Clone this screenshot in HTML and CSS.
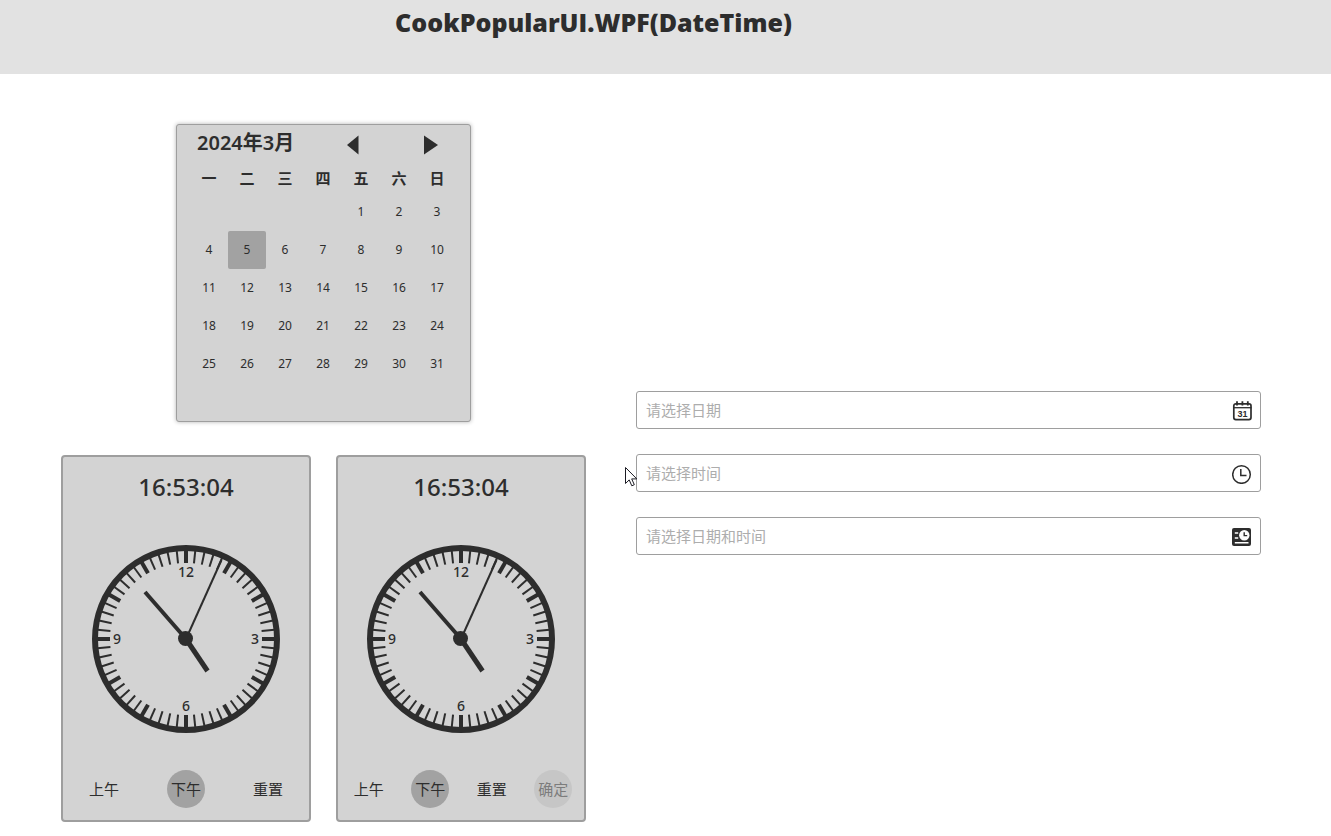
FILE: index.html
```html
<!DOCTYPE html>
<html lang="zh-CN">
<head>
  <meta charset="utf-8">
  <meta name="viewport" content="width=device-width, initial-scale=1">
  <title>CookPopularUI.WPF(DateTime)</title>
  <link rel="stylesheet" href="styles.css">
</head>
<body>
  <svg class="sprite" aria-hidden="true">
    <defs>
      <g id="hour-ticks">
        <line class="tick-major" y1="-89" y2="-76"/>
        <line class="tick-minor" y1="-89" y2="-76" transform="rotate(6)"/>
        <line class="tick-minor" y1="-89" y2="-76" transform="rotate(12)"/>
        <line class="tick-minor" y1="-89" y2="-76" transform="rotate(18)"/>
        <line class="tick-minor" y1="-89" y2="-76" transform="rotate(24)"/>
      </g>
      <g id="dial">
        <circle class="ring" r="91"/>
        <use href="#hour-ticks"/>
        <use href="#hour-ticks" transform="rotate(30)"/>
        <use href="#hour-ticks" transform="rotate(60)"/>
        <use href="#hour-ticks" transform="rotate(90)"/>
        <use href="#hour-ticks" transform="rotate(120)"/>
        <use href="#hour-ticks" transform="rotate(150)"/>
        <use href="#hour-ticks" transform="rotate(180)"/>
        <use href="#hour-ticks" transform="rotate(210)"/>
        <use href="#hour-ticks" transform="rotate(240)"/>
        <use href="#hour-ticks" transform="rotate(270)"/>
        <use href="#hour-ticks" transform="rotate(300)"/>
        <use href="#hour-ticks" transform="rotate(330)"/>
        <line class="hand-hour" x1="0" y1="0" x2="21.5" y2="32"/>
        <line class="hand-minute" x1="0" y1="0" x2="-41" y2="-47"/>
        <line class="hand-second" x1="0" y1="0" x2="35.5" y2="-79"/>
        <circle class="hub" cx="-0.5" cy="-0.5" r="7.5"/>
      </g>
    </defs>
  </svg>

  <header class="page-header">
    <h1 class="page-title">CookPopularUI.WPF(DateTime)</h1>
  </header>

  <main class="demo">
    <div class="panels">
      <section class="calendar" aria-label="日历">
        <div class="calendar-bar">
          <button class="month" type="button">2024年3月</button>
          <button class="nav-button" type="button" aria-label="上个月">
            <svg width="12" height="20" viewBox="0 0 12 20"><path d="M11.500 .5v19L0 10z"/></svg>
          </button>
          <button class="nav-button" type="button" aria-label="下个月">
            <svg width="14" height="20" viewBox="0 0 14 20"><path d="M0 .5v19L14 10z"/></svg>
          </button>
        </div>
        <table class="days">
          <thead>
            <tr><th>一</th><th>二</th><th>三</th><th>四</th><th>五</th><th>六</th><th>日</th></tr>
          </thead>
          <tbody>
            <tr><td></td><td></td><td></td><td></td><td><button class="day" type="button">1</button></td><td><button class="day" type="button">2</button></td><td><button class="day" type="button">3</button></td></tr>
            <tr><td><button class="day" type="button">4</button></td><td><button class="day day-selected" type="button" aria-pressed="true">5</button></td><td><button class="day" type="button">6</button></td><td><button class="day" type="button">7</button></td><td><button class="day" type="button">8</button></td><td><button class="day" type="button">9</button></td><td><button class="day" type="button">10</button></td></tr>
            <tr><td><button class="day" type="button">11</button></td><td><button class="day" type="button">12</button></td><td><button class="day" type="button">13</button></td><td><button class="day" type="button">14</button></td><td><button class="day" type="button">15</button></td><td><button class="day" type="button">16</button></td><td><button class="day" type="button">17</button></td></tr>
            <tr><td><button class="day" type="button">18</button></td><td><button class="day" type="button">19</button></td><td><button class="day" type="button">20</button></td><td><button class="day" type="button">21</button></td><td><button class="day" type="button">22</button></td><td><button class="day" type="button">23</button></td><td><button class="day" type="button">24</button></td></tr>
            <tr><td><button class="day" type="button">25</button></td><td><button class="day" type="button">26</button></td><td><button class="day" type="button">27</button></td><td><button class="day" type="button">28</button></td><td><button class="day" type="button">29</button></td><td><button class="day" type="button">30</button></td><td><button class="day" type="button">31</button></td></tr>
            <tr><td></td><td></td><td></td><td></td><td></td><td></td><td></td></tr>
          </tbody>
        </table>
      </section>

      <div class="clocks">
        <section class="clock" aria-label="时钟">
          <time class="clock-time">16:53:04</time>
          <svg class="clock-face" viewBox="-94 -94 188 188">
            <use href="#dial"/>
            <text class="numeral" x="0" y="-62">12</text>
            <text class="numeral" x="69" y="5">3</text>
            <text class="numeral" x="0" y="72">6</text>
            <text class="numeral" x="-69" y="5">9</text>
          </svg>
          <div class="clock-actions">
            <button class="action" type="button">上午</button>
            <button class="action action-on" type="button" aria-pressed="true">下午</button>
            <button class="action" type="button">重置</button>
          </div>
        </section>
        <section class="clock" aria-label="时钟选择">
          <time class="clock-time">16:53:04</time>
          <svg class="clock-face" viewBox="-94 -94 188 188">
            <use href="#dial"/>
            <text class="numeral" x="0" y="-62">12</text>
            <text class="numeral" x="69" y="5">3</text>
            <text class="numeral" x="0" y="72">6</text>
            <text class="numeral" x="-69" y="5">9</text>
          </svg>
          <div class="clock-actions">
            <button class="action" type="button">上午</button>
            <button class="action action-on" type="button" aria-pressed="true">下午</button>
            <button class="action" type="button">重置</button>
            <button class="action action-confirm" type="button" disabled>确定</button>
          </div>
        </section>
      </div>
    </div>

    <form class="pickers">
      <div class="picker">
        <input class="picker-input" type="text" aria-label="日期" placeholder="请选择日期">
        <button class="picker-button" type="button" aria-label="打开日历">
          <svg width="20" height="20" viewBox="0 0 20 20">
            <rect x="1.800" y="2.800" width="17.200" height="15.800" rx="2" fill="none" stroke="currentColor" stroke-width="1.700"/>
            <path d="M1.500 6.700h18" stroke="currentColor" stroke-width="1.300"/>
            <path d="M5 .3v4.200M10.400 .3v4.200M15.800 .3v4.200" stroke="currentColor" stroke-width="1.800"/>
            <text class="icon-day" x="10.400" y="15.900">31</text>
          </svg>
        </button>
      </div>
      <div class="picker">
        <input class="picker-input" type="text" aria-label="时间" placeholder="请选择时间">
        <button class="picker-button" type="button" aria-label="打开时钟">
          <svg width="20" height="20" viewBox="0 0 20 20">
            <circle cx="9.500" cy="10.500" r="8.800" fill="none" stroke="currentColor" stroke-width="1.500"/>
            <path d="M8.800 5v6.500h5.700" fill="none" stroke="currentColor" stroke-width="1.500"/>
          </svg>
        </button>
        <svg class="pointer" width="13" height="20" viewBox="0 0 13 20" aria-hidden="true">
          <path d="M.5 .5v16l3.700-3.600 2.600 5.900 2.500-1.100-2.600-5.800h5.100z" fill="#fff" stroke="#1c1c24"/>
        </svg>
      </div>
      <div class="picker">
        <input class="picker-input" type="text" aria-label="日期和时间" placeholder="请选择日期和时间">
        <button class="picker-button" type="button" aria-label="打开日期和时间">
          <svg width="20" height="20" viewBox="0 0 20 20">
            <rect x="0" y="1" width="19" height="18" rx="2" fill="currentColor"/>
            <circle cx="12.300" cy="8.300" r="5.200" fill="#fff"/>
            <path d="M12.200 5.200v3.400h3" fill="none" stroke="currentColor" stroke-width="1.400"/>
            <path d="M2.800 6h3.400M2.800 11h3.400M2.800 15.800h13.700" stroke="#fff" stroke-width="1.500"/>
          </svg>
        </button>
      </div>
    </form>
  </main>
</body>
</html>
```
FILE: styles.css
```css
:root {
  --ink: #2d2d2d;
  --surface: #d3d3d3;
  --edge: #9e9e9e;
  --accent: #a2a2a2;
}

* {
  box-sizing: border-box;
}

body {
  margin: 0;
  background: #fff;
  color: var(--ink);
  font-family: "Noto Sans", "Noto Sans CJK SC", sans-serif;
}

button {
  padding: 0;
  border: 0;
  background: none;
  color: inherit;
  font: inherit;
}

.sprite {
  display: block;
  width: 0;
  height: 0;
}

.page-header {
  height: 74px;
  padding: 5px 144px 0 0;
  background: #e2e2e2;
  text-align: center;
}

.page-title {
  margin: 0;
  font-family: "Open Sans", sans-serif;
  font-size: 25px;
  font-weight: 800;
  line-height: 34px;
}

.demo {
  display: grid;
  grid-template-columns: 525px 1fr;
  gap: 50px;
  align-items: center;
  padding: 50px 70px 14px 61px;
}

.panels {
  display: flex;
  flex-direction: column;
  align-items: center;
  gap: 33px;
}

.calendar {
  padding: 0 14px 0 13px;
  border: 1px solid var(--edge);
  border-radius: 3px;
  background: var(--surface);
  box-shadow: 0 0 4px rgba(0, 0, 0, 0.3);
}

.calendar-bar {
  display: grid;
  grid-template-columns: 1fr 78px 78px;
  align-items: center;
  height: 40px;
  margin-right: -14px;
}

.month {
  padding-left: 7px;
  font-size: 20px;
  font-weight: 600;
  line-height: 36px;
  text-align: left;
  align-self: start;
}

.nav-button {
  display: flex;
  justify-content: center;
}

.nav-button svg {
  fill: currentColor;
}

.days {
  border-collapse: collapse;
  table-layout: fixed;
  width: 266px;
}

.days th,
.days td {
  padding: 0;
  text-align: center;
}

.days th {
  height: 28px;
  padding-bottom: 2px;
  font-size: 15px;
  font-weight: 700;
  line-height: 26px;
}

.days td {
  height: 38px;
}

.day {
  display: block;
  width: 38px;
  height: 38px;
  padding-bottom: 2px;
  border-radius: 2px;
  font-size: 12px;
}

.day-selected {
  background: var(--accent);
}

.clocks {
  display: grid;
  grid-template-columns: 1fr 1fr;
  gap: 25px;
  width: 100%;
}

.clock {
  display: flex;
  flex-direction: column;
  align-items: center;
  padding-bottom: 12px;
  border: 2px solid var(--edge);
  border-radius: 4px;
  background: var(--surface);
}

.clock-time {
  font-size: 24px;
  font-weight: 500;
  line-height: 60px;
}

.clock-face {
  display: block;
  width: 188px;
  height: 188px;
  margin: 28px 0 37px;
}

.ring {
  fill: none;
  stroke: var(--ink);
  stroke-width: 6px;
}

.tick-major,
.hand-minute {
  stroke: var(--ink);
  stroke-width: 4px;
}

.tick-minor,
.hand-second {
  stroke: var(--ink);
  stroke-width: 2px;
}

.hand-hour {
  stroke: var(--ink);
  stroke-width: 5px;
}

.hub,
.numeral {
  fill: var(--ink);
}

.numeral {
  font-size: 14px;
  font-weight: 500;
  text-anchor: middle;
}

.clock-actions {
  display: grid;
  grid-auto-columns: 1fr;
  grid-auto-flow: column;
  justify-items: center;
  width: 100%;
}

.action {
  display: flex;
  align-items: center;
  justify-content: center;
  width: 38px;
  height: 38px;
  padding-bottom: 2px;
  border-radius: 50%;
  font-size: 15px;
  white-space: nowrap;
}

.action-on {
  background: var(--accent);
}

.action-confirm {
  background: #c6c6c6;
  color: #7c7c7c;
}

.pickers {
  display: flex;
  flex-direction: column;
  gap: 25px;
}

.picker {
  position: relative;
  display: flex;
  align-items: center;
  height: 38px;
  padding: 0 8px 0 9px;
  border: 1px solid var(--edge);
  border-radius: 3px;
  background: #fff;
}

.picker-input {
  flex: 1;
  min-width: 0;
  height: 100%;
  padding: 0;
  border: 0;
  outline: 0;
  background: none;
  color: var(--ink);
  font: 15px "Noto Sans", "Noto Sans CJK SC", sans-serif;
}

.picker-input::placeholder {
  color: #adadad;
  opacity: 1;
}

.picker-button {
  display: flex;
  padding-top: 2px;
}

.icon-day {
  fill: currentColor;
  font-family: "Liberation Sans", sans-serif;
  font-size: 9px;
  font-weight: 700;
  text-anchor: middle;
}

.pointer {
  position: absolute;
  top: 12px;
  left: -12px;
}
```
